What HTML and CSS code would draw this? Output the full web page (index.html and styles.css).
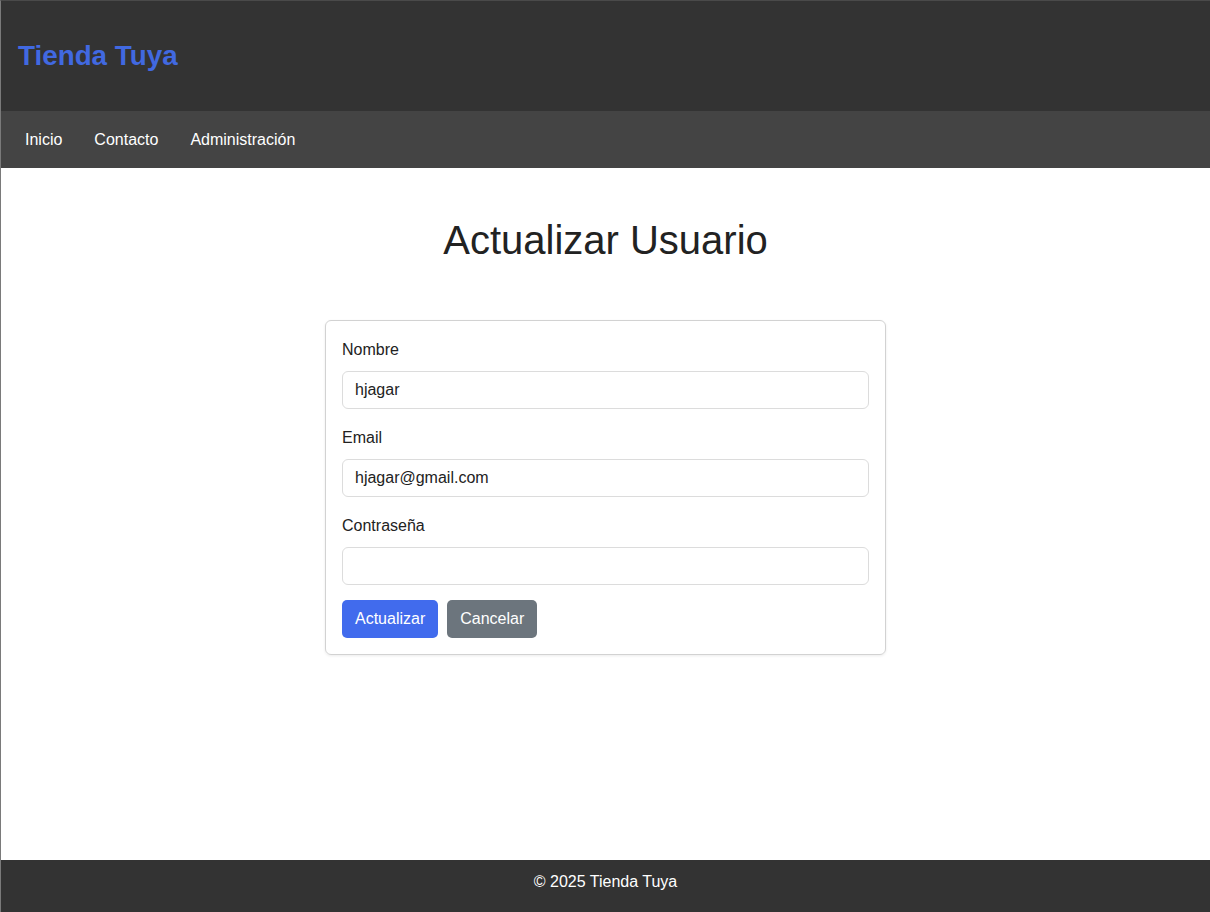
FILE: index.html
```html
<!DOCTYPE html>
<html lang="es">
<head>
<meta charset="utf-8">
<title>Actualizar Usuario - Tienda Tuya</title>
<link rel="stylesheet" href="styles.css">
</head>
<body>
<div class="page">
  <header class="site-header">
    <h1 class="logo">Tienda Tuya</h1>
  </header>
  <nav class="site-nav">
    <a href="#">Inicio</a>
    <a href="#">Contacto</a>
    <a href="#">Administración</a>
  </nav>
  <main class="main">
    <h2 class="page-title">Actualizar Usuario</h2>
    <form class="card">
      <label class="field-label" for="nombre">Nombre</label>
      <input class="field-input" id="nombre" type="text" value="hjagar">
      <label class="field-label" for="email">Email</label>
      <input class="field-input" id="email" type="email" value="hjagar@gmail.com">
      <label class="field-label" for="pass">Contraseña</label>
      <input class="field-input field-input-last" id="pass" type="password">
      <div class="actions">
        <button type="button" class="btn btn-primary">Actualizar</button>
        <button type="button" class="btn btn-secondary">Cancelar</button>
      </div>
    </form>
  </main>
  <footer class="site-footer">© 2025 Tienda Tuya</footer>
</div>
</body>
</html>
```
FILE: styles.css
```css
* { box-sizing: border-box; }
html, body { margin: 0; padding: 0; }
body {
  font-family: "Liberation Sans", Arial, sans-serif;
  font-size: 16px;
  color: #222;
  background: #fff;
}
.page {
  min-height: 912px;
  display: flex;
  flex-direction: column;
  border-top: 1px solid #4a4a4a;
  border-left: 1px solid #7a7a7a;
}
.site-header {
  background: #333;
  height: 110px;
  display: flex;
  align-items: center;
  padding: 0 17px;
}
.logo {
  margin: 0;
  font-size: 27.8px;
  font-weight: bold;
  color: #4169e1;
  line-height: 34px;
}
.site-nav {
  background: #444;
  height: 57px;
  display: flex;
  align-items: center;
  gap: 32px;
  padding-left: 24px;
}
.site-nav a {
  color: #fff;
  text-decoration: none;
  font-size: 16px;
  line-height: 24px;
}
.main {
  flex: 1;
  display: flex;
  flex-direction: column;
  align-items: center;
  padding-top: 48px;
}
.page-title {
  margin: 0 0 56px;
  font-size: 40px;
  font-weight: normal;
  line-height: 48px;
  color: #222;
}
.card {
  width: 561px;
  border: 1px solid #d2d2d2;
  border-radius: 6px;
  box-shadow: 0 1px 3px rgba(0,0,0,0.08);
  padding: 16px;
  display: flex;
  flex-direction: column;
}
.field-label {
  line-height: 24px;
  margin-top: 1px;
  margin-bottom: 9px;
  color: #222;
}
.field-input {
  height: 38px;
  border: 1px solid #dcdcdc;
  border-radius: 6px;
  padding: 6px 12px;
  font-family: inherit;
  font-size: 16px;
  color: #222;
  margin-bottom: 16px;
  outline: none;
}
.field-input-last { margin-bottom: 15px; }
.actions {
  display: flex;
  gap: 9px;
}
.btn {
  height: 38px;
  border: 1px solid transparent;
  border-radius: 5px;
  padding: 6px 12px;
  font-family: inherit;
  font-size: 16px;
  line-height: 24px;
  color: #fff;
  cursor: pointer;
}
.btn-primary { background: #416bed; }
.btn-secondary { background: #6c757d; }
.site-footer {
  background: #333;
  color: #fff;
  text-align: center;
  height: 52px;
  line-height: 24px;
  padding: 10px 0 18px;
}
```
